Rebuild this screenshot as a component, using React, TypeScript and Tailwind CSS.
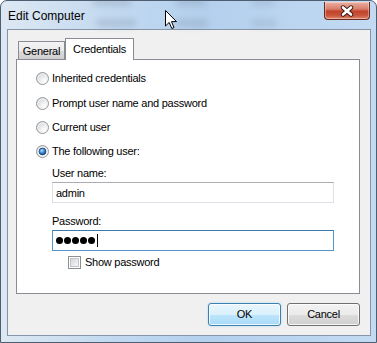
import { useState } from "react";

type Option = { id: string; label: string };

const options: Option[] = [
  { id: "inherited", label: "Inherited credentials" },
  { id: "prompt", label: "Prompt user name and password" },
  { id: "current", label: "Current user" },
  { id: "following", label: "The following user:" },
];

function RadioDot({ checked }: { checked: boolean }) {
  return (
    <svg width="13" height="13" viewBox="0 0 13 13" className="shrink-0">
      <defs>
        <radialGradient id="rOff" cx="0.65" cy="0.7" r="0.7">
          <stop offset="0" stopColor="#ffffff" />
          <stop offset="1" stopColor="#d6d8db" />
        </radialGradient>
        <radialGradient id="rOn" cx="0.4" cy="0.35" r="0.7">
          <stop offset="0" stopColor="#b8ddfb" />
          <stop offset="0.5" stopColor="#3f8ee0" />
          <stop offset="1" stopColor="#0e3f7c" />
        </radialGradient>
      </defs>
      <circle cx="6.5" cy="6.5" r="6" fill="url(#rOff)" stroke="#979899" strokeWidth="1" />
      <circle cx="6.5" cy="6.5" r="4.6" fill="none" stroke="#ffffff" strokeOpacity="0.7" strokeWidth="0.8" />
      {checked && (
        <circle cx="6.5" cy="6.5" r="3.4" fill="url(#rOn)" stroke="#1b4272" strokeWidth="0.8" />
      )}
    </svg>
  );
}

function CheckBox() {
  return (
    <span className="flex h-[13px] w-[13px] shrink-0 items-center justify-center border border-[#8e8f8f] bg-white">
      <span className="h-[9px] w-[9px] border border-[#c2c5ca] bg-[linear-gradient(135deg,#d4d7dc,#f7f7f8)]" />
    </span>
  );
}

function CloseGlyph() {
  return (
    <svg width="16" height="12" viewBox="0 0 16 12">
      <path d="M4 2.5 L12 9.5 M12 2.5 L4 9.5" stroke="#3b1a14" strokeWidth="4.4" strokeLinecap="round" />
      <path d="M4 2.5 L12 9.5 M12 2.5 L4 9.5" stroke="#ffffff" strokeWidth="2.6" strokeLinecap="round" />
    </svg>
  );
}

function Cursor() {
  return (
    <svg width="13" height="20" viewBox="0 0 13 20" className="absolute left-[164px] top-[9px]">
      <path
        d="M0.5 0.5 L0.5 16 L4.2 12.4 L6.8 18.5 L9 17.6 L6.5 11.6 L11.5 11.6 Z"
        fill="#ffffff"
        stroke="#000000"
        strokeWidth="1"
        strokeLinejoin="round"
      />
    </svg>
  );
}

export default function App() {
  const [mode, setMode] = useState<string>("following");
  const [userName, setUserName] = useState<string>("admin");
  const [showPassword, setShowPassword] = useState<boolean>(false);

  return (
    <div className="relative h-[343px] w-[377px] overflow-hidden rounded-t-[7px] border border-[#4d5e71] bg-[linear-gradient(90deg,#dde8f3_0%,#c2d9f0_30%,#b4d0ee_55%,#c3daf2_100%)] font-['Liberation_Sans',Arial,sans-serif] text-[11px] tracking-[-0.25px] text-black">
      <div className="relative flex h-[28px] items-start">
        <span className="absolute left-[92px] top-[-3px] h-[8px] w-[38px] rounded-full bg-[#6f7f92] opacity-25 blur-[3px]" />
        <span className="absolute left-[175px] top-[-3px] h-[8px] w-[30px] rounded-full bg-[#6f7f92] opacity-25 blur-[3px]" />
        <span className="absolute left-[250px] top-[-3px] h-[8px] w-[24px] rounded-full bg-[#6f7f92] opacity-20 blur-[3px]" />
        <span className="absolute left-[95px] top-[18px] h-[8px] w-[40px] rounded-full bg-[#6f7f92] opacity-25 blur-[3px]" />
        <span className="absolute left-[175px] top-[18px] h-[8px] w-[32px] rounded-full bg-[#6f7f92] opacity-25 blur-[3px]" />
        <span className="absolute left-[250px] top-[18px] h-[8px] w-[26px] rounded-full bg-[#6f7f92] opacity-20 blur-[3px]" />
        <span className="relative ml-[7px] mt-[6px] text-[12px] tracking-normal text-black">
          Edit Computer
        </span>
        <button className="relative ml-auto mr-[6px] mt-[1px] flex h-[18px] w-[46px] items-center justify-center rounded-b-[4px] border border-t-0 border-[#6b2a20] bg-[linear-gradient(180deg,#eab0a4_0%,#d9806d_40%,#c2432b_55%,#c9563d_80%,#e08a6e_100%)] shadow-[inset_0_0_0_1px_rgba(255,255,255,0.35)]">
          <CloseGlyph />
        </button>
        <Cursor />
      </div>

      <div className="mb-[6px] ml-[6px] mr-[5px] h-[307px] border border-[#8594a6] bg-[#f0f0f0] pl-[8px] pr-[10px] pt-[8px]">
        <div className="flex h-[21px] items-end">
          <div className="ml-[2px] flex h-[18px] w-[47px] items-center justify-center border border-b-0 border-[#898c95] bg-[linear-gradient(180deg,#f3f3f3_0%,#ebebeb_50%,#dddddd_51%,#cfcfcf_100%)] pt-[1px]">
            General
          </div>
          <div className="relative z-10 -mb-px flex h-[22px] w-[69px] items-center justify-center border border-b-0 border-[#898c95] bg-white">
            Credentials
          </div>
        </div>

        <div className="h-[235px] w-[344px] border border-[#898c95] bg-white">
          <div className="flex flex-col pl-[19px] pt-[6px]">
            {options.map((o, i) => (
              <label
                key={o.id}
                onClick={() => setMode(o.id)}
                className={`flex h-[24px] items-center gap-[3px] ${i === 0 ? "mb-px" : ""}`}
              >
                <RadioDot checked={mode === o.id} />
                <span>{o.label}</span>
              </label>
            ))}
          </div>

          <div className="flex flex-col pl-[35px]">
            <span className="mt-[3px] h-[14px] leading-[14px]">User name:</span>
            <input
              value={userName}
              onChange={(e) => setUserName(e.target.value)}
              className="mt-[2px] h-[21px] w-[282px] border border-[#dbdfe6] border-t-[#abadb3] bg-white px-[3px] text-[11px] outline-none"
            />
            <span className="mt-[11px] h-[14px] leading-[14px]">Password:</span>
            <div className="mt-[2px] flex h-[21px] w-[282px] items-center gap-[1px] border border-[#5593c8] border-t-[#3d7bad] bg-white pl-[3px]">
              {[0, 1, 2, 3, 4].map((d) => (
                <span key={d} className="h-[7px] w-[7px] rounded-full bg-black" />
              ))}
              <span className="ml-[1px] h-[13px] w-px bg-black" />
            </div>
            <label
              onClick={() => setShowPassword(!showPassword)}
              className="ml-[16px] mt-[5px] flex h-[13px] items-center gap-[4px]"
            >
              <CheckBox />
              <span>Show password</span>
            </label>
          </div>
        </div>

        <div className="mt-[9px] flex justify-end gap-[6px]">
          <button className="flex h-[23px] w-[73px] items-center justify-center rounded-[3px] border border-[#3c7fb1] bg-[linear-gradient(180deg,#eaf6fd_0%,#d9f0fc_50%,#bee6fd_51%,#a7d9f5_100%)] shadow-[inset_0_0_0_1px_rgba(255,255,255,0.8),0_0_2px_#9fd3f4]">
            OK
          </button>
          <button className="flex h-[23px] w-[73px] items-center justify-center rounded-[3px] border border-[#707070] bg-[linear-gradient(180deg,#f2f2f2_0%,#ebebeb_50%,#dddddd_51%,#cfcfcf_100%)] shadow-[inset_0_0_0_1px_rgba(255,255,255,0.8)]">
            Cancel
          </button>
        </div>
      </div>
    </div>
  );
}
